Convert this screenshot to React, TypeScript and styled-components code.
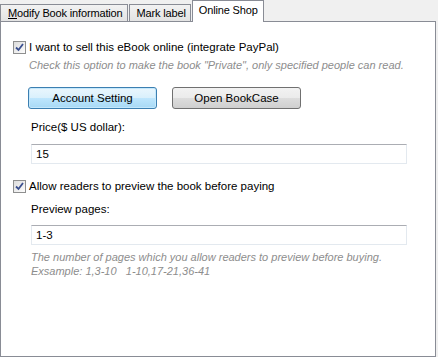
import React, { useState } from 'react';
import styled, { createGlobalStyle, css } from 'styled-components';

const GlobalStyle = createGlobalStyle`
    html, body {
        margin: 0;
        padding: 0;
        background: #f0f0f0;
    }
    body {
        font-family: "Liberation Sans", Arial, sans-serif;
        font-size: 11px;
        color: #000;
    }
`;

const tabs = ['Modify Book information', 'Mark label', 'Online Shop'];

const App = () => {
    const [active, setActive] = useState(2);
    const [sell, setSell] = useState(true);
    const [preview, setPreview] = useState(true);
    const [price, setPrice] = useState('15');
    const [pages, setPages] = useState('1-3');

    return (
        <>
            <GlobalStyle />
            <Window>
                <TabStrip>
                    {tabs.map((t, i) => (
                        <Tab key={t} active={i === active} onClick={() => setActive(i)}>
                            {i === 0 ? (
                                <>
                                    <u>M</u>odify Book information
                                </>
                            ) : (
                                t
                            )}
                        </Tab>
                    ))}
                </TabStrip>
                <Panel>
                    <CheckRow onClick={() => setSell(!sell)}>
                        <CheckBox checked={sell} />
                        <span>I want to sell this eBook online (integrate PayPal)</span>
                    </CheckRow>
                    <Hint>Check this option to make the book "Private", only specified people can read.</Hint>

                    <ButtonRow>
                        <Button primary>Account Setting</Button>
                        <Button>Open BookCase</Button>
                    </ButtonRow>

                    <FieldLabel top={11}>Price($ US dollar):</FieldLabel>
                    <TextBox top={10} value={price} onChange={e => setPrice(e.target.value)} />

                    <CheckRow top={15} onClick={() => setPreview(!preview)}>
                        <CheckBox checked={preview} />
                        <span>Allow readers to preview the book before paying</span>
                    </CheckRow>

                    <FieldLabel top={9}>Preview pages:</FieldLabel>
                    <TextBox top={9} value={pages} onChange={e => setPages(e.target.value)} />

                    <Hint top={5} indent={30}>
                        The number of pages which you allow readers to preview before buying.
                        <br />
                        Exsample: 1,3-10&nbsp;&nbsp; 1-10,17-21,36-41
                    </Hint>
                </Panel>
            </Window>
        </>
    );
};

export default App;

const CheckBox = ({ checked }: { checked: boolean }) => (
    <Box>
        {checked && (
            <svg width="9" height="9" viewBox="0 0 9 9">
                <path d="M1 4.5 L3.5 7 L8 1" fill="none" stroke="#3a4f8f" strokeWidth="1.8" />
            </svg>
        )}
    </Box>
);

const Window = styled.div`
    width: 438px;
    height: 357px;
    display: flex;
    flex-direction: column;
    background: #f0f0f0;
`;

const TabStrip = styled.div`
    display: flex;
    align-items: flex-end;
    height: 21px;
    position: relative;
    z-index: 2;
`;

interface TabProps {
    active?: boolean;
}

const Tab = styled.div<TabProps>`
    height: 16px;
    line-height: 17px;
    padding: 0 4px 0 7px;
    margin-right: 1px;
    border: 1px solid #898c95;
    border-bottom: none;
    background: linear-gradient(#f2f2f2, #e3e3e3);
    font-size: 11px;
    letter-spacing: -0.15px;
    white-space: nowrap;
    cursor: default;

    ${props => props.active && css`
        height: 21px;
        line-height: 19px;
        margin-right: 0;
        margin-bottom: -1px;
        padding: 0 5px 0 6px;
        background: #fff;
    `}
`;

const Panel = styled.div`
    width: 436px;
    height: 336px;
    box-sizing: border-box;
    border: 1px solid #898c95;
    background: #fff;
    display: flex;
    flex-direction: column;
    padding-top: 18px;
`;

interface SpacingProps {
    top?: number;
    indent?: number;
}

const CheckRow = styled.div<SpacingProps>`
    display: flex;
    align-items: center;
    gap: 3px;
    height: 14px;
    margin-top: ${p => p.top ?? 0}px;
    padding-left: 12px;
    font-size: 11.5px;
    white-space: nowrap;
    cursor: default;
`;

const Box = styled.div`
    width: 11px;
    height: 11px;
    border: 1px solid #8e8f8f;
    background: linear-gradient(135deg, #dcdcdc, #fdfdfd);
    display: flex;
    align-items: center;
    justify-content: center;
`;

const Hint = styled.div<SpacingProps>`
    margin-top: ${p => p.top ?? 4}px;
    padding-left: ${p => p.indent ?? 28}px;
    font-style: italic;
    color: #8d8d8d;
    line-height: 14px;
    font-size: 11px;
    white-space: nowrap;
`;

const ButtonRow = styled.div`
    display: flex;
    gap: 15px;
    margin-top: 15px;
    padding-left: 27px;
`;

interface ButtonProps {
    primary?: boolean;
}

const Button = styled.button<ButtonProps>`
    width: 129px;
    height: 22px;
    border: 1px solid #707070;
    border-radius: 3px;
    background: linear-gradient(#f2f2f2 0%, #ebebeb 50%, #dddddd 51%, #cfcfcf 100%);
    font-family: "Liberation Sans", Arial, sans-serif;
    font-size: 11.5px;
    color: #000;
    padding: 0;

    ${props => props.primary && css`
        border-color: #3c7fb1;
        background: linear-gradient(#eaf6fd 0%, #d9f0fc 50%, #bee6fd 51%, #a7d9f5 100%);
        box-shadow: inset 0 0 0 1px #c4e8fc;
    `}
`;

const FieldLabel = styled.div<SpacingProps>`
    margin-top: ${p => p.top ?? 0}px;
    padding-left: 30px;
    line-height: 14px;
    font-size: 11.5px;
`;

const TextBox = styled.input<SpacingProps>`
    margin: ${p => p.top ?? 0}px 0 0 30px;
    width: 376px;
    height: 20px;
    box-sizing: border-box;
    border: 1px solid #e3e9ef;
    border-top-color: #abadb3;
    padding: 0 4px;
    font-family: "Liberation Sans", Arial, sans-serif;
    font-size: 11.5px;
    outline: none;
`;
